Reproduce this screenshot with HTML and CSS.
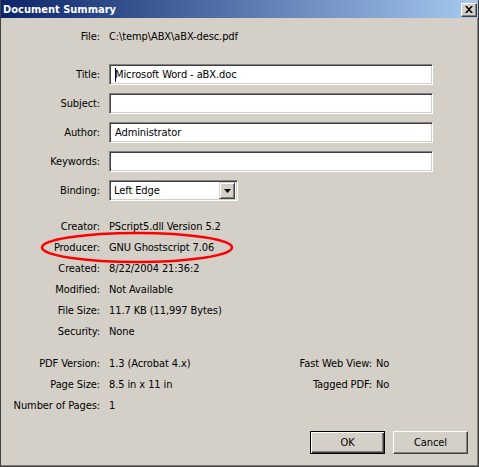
FILE: index.html
```html
<!DOCTYPE html>
<html>
<head>
<meta charset="utf-8">
<link rel="stylesheet" href="styles.css">
</head>
<body>
<div class="window">
  <div class="titlebar">
    <span class="title">Document Summary</span>
    <span class="close"><svg width="8" height="7" viewBox="0 0 8 7"><path d="M0 0h2l2 2.2L6 0h2L5 3.5 8 7H6L4 4.8 2 7H0l3-3.5z" fill="#000"/></svg></span>
  </div>
  <div class="content">
    <div class="row"><span class="label">File:</span><span class="value">C:\temp\ABX\aBX-desc.pdf</span></div>

    <div class="fields">
      <div class="frow"><span class="label">Title:</span><div class="textbox"><span class="caret"></span>Microsoft Word - aBX.doc</div></div>
      <div class="frow"><span class="label">Subject:</span><div class="textbox"></div></div>
      <div class="frow"><span class="label">Author:</span><div class="textbox">Administrator</div></div>
      <div class="frow"><span class="label">Keywords:</span><div class="textbox"></div></div>
      <div class="frow"><span class="label">Binding:</span>
        <div class="select"><span class="selval">Left Edge</span><span class="arrow"><svg width="7" height="4" viewBox="0 0 7 4"><path d="M0 0h7L3.5 4z" fill="#000"/></svg></span></div>
      </div>
    </div>

    <div class="info">
      <div class="row"><span class="label">Creator:</span><span class="value">PScript5.dll Version 5.2</span></div>
      <div class="row"><span class="label">Producer:</span><span class="value">GNU Ghostscript 7.06</span></div>
      <div class="row"><span class="label">Created:</span><span class="value">8/22/2004 21:36:2</span></div>
      <div class="row"><span class="label">Modified:</span><span class="value">Not Available</span></div>
      <div class="row"><span class="label">File Size:</span><span class="value">11.7 KB (11,997 Bytes)</span></div>
      <div class="row"><span class="label">Security:</span><span class="value">None</span></div>
    </div>

    <div class="pdfinfo">
      <div class="row"><span class="label">PDF Version:</span><span class="value v-left">1.3 (Acrobat 4.x)</span><span class="rlabel">Fast Web View:</span><span class="rvalue">No</span></div>
      <div class="row"><span class="label">Page Size:</span><span class="value v-left">8.5 in x 11 in</span><span class="rlabel">Tagged PDF:</span><span class="rvalue">No</span></div>
      <div class="row"><span class="label">Number of Pages:</span><span class="value v-left">1</span></div>
    </div>

    <div class="buttons">
      <div class="btn default">OK</div>
      <div class="btn">Cancel</div>
    </div>
  </div>
  <svg class="circle" width="196" height="34" viewBox="0 0 196 34"><ellipse cx="97" cy="16.5" rx="95" ry="14.5" fill="none" stroke="#ff0000" stroke-width="2.5"/></svg>
</div>
</body>
</html>
```
FILE: styles.css
```css
html, body {
  margin: 0;
  padding: 0;
  background: #d4d0c8;
}
.window {
  position: relative;
  width: 479px;
  height: 467px;
  box-sizing: border-box;
  background: #d4d0c8;
  border-left: 1px solid #404040;
  border-right: 1px solid #404040;
  border-bottom: 1px solid #404040;
  box-shadow: inset -1px -1px 0 #808080;
  font-family: "DejaVu Sans Condensed", "DejaVu Sans", sans-serif;
  font-size: 11px;
  letter-spacing: -0.1px;
  color: #000;
  overflow: hidden;
}
.titlebar {
  height: 18px;
  margin-left: -1px;
  margin-right: -1px;
  background: linear-gradient(to right, #0a246a, #a6caf0);
  display: flex;
  align-items: center;
  justify-content: space-between;
  padding: 0 2px 0 3px;
}
.title {
  color: #fff;
  font-weight: bold;
  font-size: 11px;
  letter-spacing: 0;
}
.close {
  width: 16px;
  height: 14px;
  box-sizing: border-box;
  background: #d4d0c8;
  border: 1px solid;
  border-color: #fff #404040 #404040 #fff;
  box-shadow: inset -1px -1px 0 #808080;
  display: flex;
  align-items: center;
  justify-content: center;
  margin-top: 1px;
}
.content {
  padding: 8px 10px 0 0;
}
.row {
  display: flex;
  align-items: center;
  height: 21px;
}
.label {
  width: 99px;
  text-align: right;
  margin-right: 9px;
  flex: none;
  white-space: nowrap;
}
.value {
  white-space: nowrap;
}
.fields {
  margin-top: 17px;
  display: flex;
  flex-direction: column;
  gap: 8px;
}
.frow {
  display: flex;
  align-items: center;
  height: 21px;
}
.textbox {
  width: 324px;
  height: 21px;
  box-sizing: border-box;
  background: #fff;
  border: 1px solid;
  border-color: #808080 #fff #fff #808080;
  box-shadow: inset 1px 1px 0 #404040, inset -1px -1px 0 #d4d0c8;
  padding-left: 5px;
  display: flex;
  align-items: center;
  white-space: nowrap;
}
.caret {
  display: inline-block;
  width: 1px;
  height: 14px;
  background: #000;
  margin-right: -1px;
}
.select {
  width: 129px;
  height: 21px;
  box-sizing: border-box;
  background: #fff;
  border: 1px solid;
  border-color: #808080 #fff #fff #808080;
  box-shadow: inset 1px 1px 0 #404040, inset -1px -1px 0 #d4d0c8;
  display: flex;
  align-items: center;
  justify-content: space-between;
  padding: 2px;
}
.selval {
  padding-left: 2px;
}
.arrow {
  width: 16px;
  height: 17px;
  box-sizing: border-box;
  background: #d4d0c8;
  border: 1px solid;
  border-color: #d4d0c8 #404040 #404040 #d4d0c8;
  box-shadow: inset 1px 1px 0 #fff, inset -1px -1px 0 #808080;
  display: flex;
  align-items: center;
  justify-content: center;
}
.info {
  margin-top: 15px;
}
.pdfinfo {
  margin-top: 11px;
}
.v-left {
  width: 178px;
}
.rlabel {
  width: 85px;
  text-align: right;
  margin-right: 4px;
  white-space: nowrap;
}
.buttons {
  margin-top: 15px;
  display: flex;
  justify-content: flex-end;
  gap: 8px;
}
.btn {
  width: 75px;
  height: 23px;
  box-sizing: border-box;
  border: 1px solid;
  border-color: #fff #404040 #404040 #fff;
  box-shadow: inset -1px -1px 0 #808080;
  display: flex;
  align-items: center;
  justify-content: center;
}
.btn.default {
  border: 1px solid #000;
  box-shadow: inset 1px 1px 0 #fff, inset -1px -1px 0 #404040, inset -2px -2px 0 #808080;
}
.circle {
  position: absolute;
  left: 39px;
  top: 231px;
}
```
